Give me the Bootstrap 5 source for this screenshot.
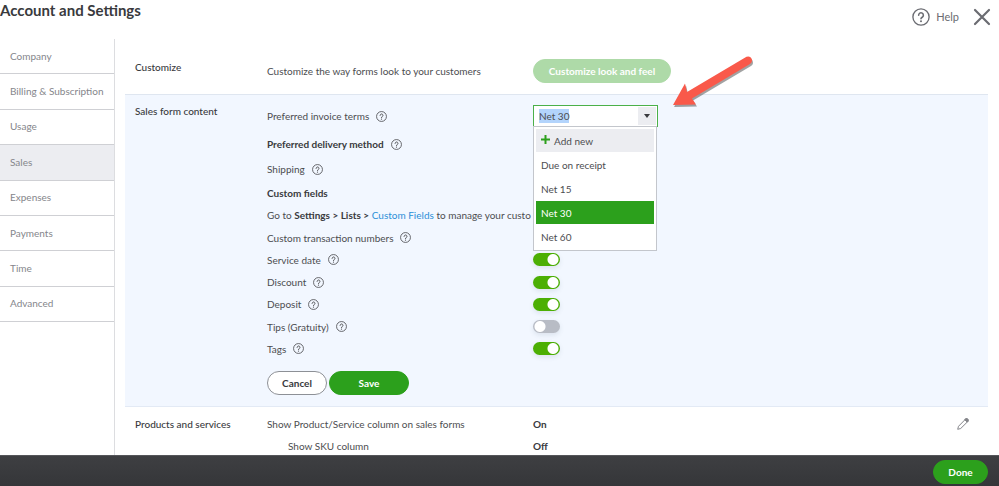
<!DOCTYPE html>
<html lang="en">
<head>
<meta charset="utf-8">
<meta name="viewport" content="width=device-width, initial-scale=1">
<title>Account and Settings</title>
<link rel="stylesheet" href="https://cdn.jsdelivr.net/npm/bootstrap@5.3.0/dist/css/bootstrap.min.css">
<style>
  :root { --green: #2ca01c; --ink: #393a3d; --muted: #6b6c72; --tint: #f2f7ff; }
  body { font-family: Lato, "Open Sans", sans-serif; font-size: 10px; line-height: 14px; color: #4c4d50; }
  .top-bar { height: 39px; }
  .top-bar h1 { font-size: 15px; line-height: 20px; color: var(--ink); }
  .top-actions { gap: 14px; padding: 0 8px 6px 0; }
  .help-link { font-size: 11px; color: var(--muted); gap: 6px; }
  .plain-btn { border: 0; padding: 0; background: none; color: var(--muted); display: inline-flex; }
  .side-menu { width: 115px; border-right: 1px solid #dcdde0; }
  .side-list { min-height: 283px; }
  .side-list a { color: #85868b; padding: 0 10px 1px; border-bottom: 1px solid #cfd0d4; text-decoration: none; white-space: nowrap; }
  .side-list a.active { background: #ecedf1; }
  .settings { padding: 0 11px 0 10px; }
  .setting-grid { display: grid; grid-template-columns: 132px 266px 1fr auto; padding: 0 19px 0 10px; }
  .section-name { color: var(--ink); font-weight: 500; }
  .customize { min-height: 56px; padding-top: 9px; border-bottom: 1px solid #dfe6f0; }
  .sales { background: var(--tint); padding: 5px 0 11px 10px; border-bottom: 1px solid #e3eaf5; }
  .products { padding-top: 6px; }
  .products .line { height: 22px; }
  .sku { padding-left: 21px; }
  .field { display: grid; grid-template-columns: 266px 1fr; align-items: center; white-space: nowrap; }
  .field strong, .section-value { color: var(--ink); }
  .field.terms { height: 32px; }
  .field.delivery { height: 24px; }
  .field.shipping { height: 26px; }
  .even-fields { min-height: 178px; }
  .field a { color: #2b8fd8; text-decoration: none; }
  .name { display: flex; align-items: center; gap: 7px; }
  .actions { padding-top: 11px; gap: 2px; }
  .pill { --bs-btn-font-size: 10px; --bs-btn-line-height: 14px; --bs-btn-font-weight: 700; --bs-btn-border-radius: 12px; --bs-btn-padding-y: 4px; --bs-btn-padding-x: 4px; }
  .pill-green, .pill-green:disabled { color: #fff; background: var(--green); border-color: var(--green); }
  .pill-green:disabled { opacity: .38; }
  .pill-light { color: var(--ink); background: #fff; border-color: #8d9096; }
  .look { min-width: 138px; }
  .cancel { min-width: 60px; }
  .save { min-width: 80px; }
  .done { min-width: 55px; }
  .combo { width: 125px; border: 1px solid #4bb049; background: #fff; height: 22px; padding: 1px; }
  .combo input { border: 0; padding: 0 4px; width: 100%; min-width: 0; color: #4c4d50; background: none; }
  .combo input:focus, .combo input:focus-visible { outline: none; }
  .combo input::selection { background: #b3d4fc; color: #4c4d50; }
  .combo button { width: 18px; border: 0; background: #ecedf1; flex: none; }
  .options { position: absolute; top: 21px; left: 0; z-index: 5; width: 124px; padding: 2px; background: #fff; border: 1px solid #c3c6cc; display: grid; gap: 1px; }
  .options li { height: 23px; padding: 0 5px; display: flex; align-items: center; }
  .options .add { background: #ecedf1; }
  .options .picked { background: var(--green); color: #fff; }
  .form-check-input.toggle { width: 27px; height: 13px; margin: 0; display: block; border: 0; border-radius: 7px; box-shadow: 0 2px 5px rgba(60, 80, 110, .12);
    background: radial-gradient(circle at 7px 50%, #fff 5px, transparent 6px) #b8bcc5; }
  .form-check-input.toggle:checked { background: radial-gradient(circle at 20px 50%, #fff 5px, transparent 6px) #4caf04; }
  .bottom-bar { height: 31px; background: linear-gradient(#3e3f42, #353639); padding: 2px 11px 0; border-top: 1px solid #55565a; }
  .arrow { position: absolute; left: 138px; top: -50px; z-index: 6; pointer-events: none; }
</style>
<script src="https://cdn.jsdelivr.net/npm/bootstrap@5.3.0/dist/js/bootstrap.bundle.min.js"></script>
</head>
<body class="d-flex flex-column vh-100 overflow-hidden bg-white">
<svg width="0" height="0" class="position-absolute" aria-hidden="true">
  <symbol id="help" viewBox="0 0 16 16">
    <circle cx="8" cy="8" r="7.200" fill="none" stroke="currentColor" stroke-width="1.2"/>
    <path d="M5.9 6.4a2.1 2.1 0 1 1 3.2 1.8c-.8.5-1.1.7-1.1 1.4" fill="none" stroke="currentColor" stroke-width="1.4" stroke-linecap="round"/>
    <circle cx="8" cy="11.7" r=".9" fill="currentColor"/>
  </symbol>
</svg>

<header class="top-bar d-flex flex-shrink-0 justify-content-between">
  <h1 class="fw-bold m-0">Account and Settings</h1>
  <div class="top-actions d-flex align-items-center">
    <a href="#" class="help-link d-flex align-items-center text-decoration-none"><svg width="18" height="18"><use href="#help"/></svg>Help</a>
    <button type="button" class="plain-btn" aria-label="Close"><svg width="18" height="18" viewBox="0 0 18 18"><path d="M2 2l14 14M16 2L2 16" stroke="currentColor" stroke-width="2.2" stroke-linecap="round"/></svg></button>
  </div>
</header>

<div class="d-flex flex-fill overflow-hidden">
  <nav class="side-menu flex-shrink-0" aria-label="Settings">
    <div class="side-list d-flex flex-column">
      <a href="#" class="d-flex flex-fill align-items-center">Company</a>
      <a href="#" class="d-flex flex-fill align-items-center">Billing &amp; Subscription</a>
      <a href="#" class="d-flex flex-fill align-items-center">Usage</a>
      <a href="#" class="d-flex flex-fill align-items-center active" aria-current="page">Sales</a>
      <a href="#" class="d-flex flex-fill align-items-center">Expenses</a>
      <a href="#" class="d-flex flex-fill align-items-center">Payments</a>
      <a href="#" class="d-flex flex-fill align-items-center">Time</a>
      <a href="#" class="d-flex flex-fill align-items-center">Advanced</a>
    </div>
  </nav>

  <main class="settings flex-fill">
    <section class="setting-grid customize align-items-center">
      <div class="section-name pb-2">Customize</div>
      <div>Customize the way forms look to your customers</div>
      <div><button type="button" class="btn pill pill-green look" disabled>Customize look and feel</button></div>
    </section>

    <section class="setting-grid sales">
      <div class="section-name pt-1">Sales form content</div>
      <div>
        <div class="field terms">
          <label class="name" for="terms">Preferred invoice terms <svg width="11" height="11"><use href="#help"/></svg></label>
          <div class="position-relative">
            <div class="combo d-flex">
              <input id="terms" type="text" role="combobox" aria-expanded="true" aria-controls="terms-list" value="Net 30">
              <button type="button" class="d-flex align-items-center justify-content-center p-0" aria-label="Show terms"><svg width="6" height="4"><path d="M0 0h6L3 4z" fill="#393a3d"/></svg></button>
            </div>
            <ul class="options list-unstyled m-0" id="terms-list" role="listbox" aria-label="Preferred invoice terms">
              <li class="add gap-1" role="option"><svg width="9" height="12" viewBox="0 0 9 12"><path d="M4.500 0v9M0 4.500h9" stroke="#2ca01c" stroke-width="2"/></svg>Add new</li>
              <li role="option">Due on receipt</li>
              <li role="option">Net 15</li>
              <li class="picked" role="option" aria-selected="true">Net 30</li>
              <li role="option">Net 60</li>
            </ul>
            <svg class="arrow" width="84" height="56" viewBox="0 0 84 56" aria-hidden="true">
              <path d="M2 50L14 28.500L16 37L75.500 1.800Q79 .5 80.500 3.500Q82 7 79 9L21 43.500L25 49.500Z" fill="#555" opacity=".55" transform="translate(1 2)"/>
              <path d="M2 50L14 28.500L16 37L75.500 1.800Q79 .5 80.500 3.500Q82 7 79 9L21 43.500L25 49.500Z" fill="#f9594a"/>
            </svg>
          </div>
        </div>
        <div class="field delivery"><div class="name"><strong>Preferred delivery method</strong> <svg width="11" height="11"><use href="#help"/></svg></div></div>
        <div class="field shipping"><div class="name">Shipping <svg width="11" height="11"><use href="#help"/></svg></div></div>
        <div class="even-fields d-flex flex-column">
          <div class="field flex-fill"><strong>Custom fields</strong></div>
          <div class="field flex-fill"><div class="overflow-hidden">Go to <strong>Settings &gt; Lists &gt;</strong> <a href="#">Custom Fields</a> to manage your custo</div></div>
          <div class="field flex-fill"><div class="name">Custom transaction numbers <svg width="11" height="11"><use href="#help"/></svg></div></div>
          <div class="field flex-fill"><label class="name" for="t1">Service date <svg width="11" height="11"><use href="#help"/></svg></label><input class="form-check-input toggle" type="checkbox" role="switch" id="t1" checked></div>
          <div class="field flex-fill"><label class="name" for="t2">Discount <svg width="11" height="11"><use href="#help"/></svg></label><input class="form-check-input toggle" type="checkbox" role="switch" id="t2" checked></div>
          <div class="field flex-fill"><label class="name" for="t3">Deposit <svg width="11" height="11"><use href="#help"/></svg></label><input class="form-check-input toggle" type="checkbox" role="switch" id="t3" checked></div>
          <div class="field flex-fill"><label class="name" for="t4">Tips (Gratuity) <svg width="11" height="11"><use href="#help"/></svg></label><input class="form-check-input toggle" type="checkbox" role="switch" id="t4"></div>
          <div class="field flex-fill"><label class="name" for="t5">Tags <svg width="11" height="11"><use href="#help"/></svg></label><input class="form-check-input toggle" type="checkbox" role="switch" id="t5" checked></div>
        </div>
        <div class="actions d-flex">
          <button type="button" class="btn pill pill-light cancel">Cancel</button>
          <button type="button" class="btn pill pill-green save">Save</button>
        </div>
      </div>
    </section>

    <section class="setting-grid products">
      <div class="line section-name d-flex align-items-center">Products and services</div>
      <div class="line d-flex align-items-center">Show Product/Service column on sales forms</div>
      <div class="line d-flex align-items-center section-value fw-bold">On</div>
      <button type="button" class="plain-btn align-items-center" aria-label="Edit products and services"><svg width="12" height="12" viewBox="0 0 12 12" fill="none" stroke="#85868b" stroke-linejoin="round"><path d="M.7 11.300L1.500 8.300L8 1.700L10.300 4L3.700 10.500Z"/><path d="M7.600 1.500L9 .5Q10.500 .3 11.300 1.500Q11.700 2.500 11.200 3.300L10.300 4.200Z" fill="#85868b"/></svg></button>
      <span></span>
      <div class="line d-flex align-items-center sku">Show SKU column</div>
      <div class="line d-flex align-items-center section-value fw-bold">Off</div>
    </section>
  </main>
</div>

<footer class="bottom-bar flex-shrink-0 d-flex align-items-center justify-content-end">
  <button type="button" class="btn pill pill-green done">Done</button>
</footer>
<script>
  document.getElementById('terms').focus();
  document.getElementById('terms').select();
</script>
</body>
</html>
